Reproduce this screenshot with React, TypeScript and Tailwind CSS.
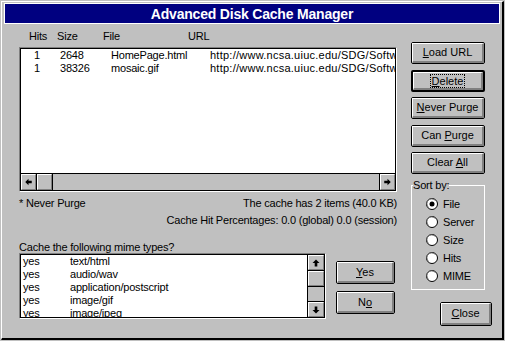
import { ReactNode } from 'react'

const CACHE_ITEMS = [
  { hits: '1', size: '2648', file: 'HomePage.html', url: 'http://www.ncsa.uiuc.edu/SDG/Software/Mosaic/HomePage.html' },
  { hits: '1', size: '38326', file: 'mosaic.gif', url: 'http://www.ncsa.uiuc.edu/SDG/Software/Mosaic/mosaic.gif' },
]

const MIME_TYPES = [
  { cache: 'yes', type: 'text/html' },
  { cache: 'yes', type: 'audio/wav' },
  { cache: 'yes', type: 'application/postscript' },
  { cache: 'yes', type: 'image/gif' },
  { cache: 'yes', type: 'image/jpeg' },
]

const SORT_OPTIONS = ['File', 'Server', 'Size', 'Hits', 'MIME']

// Win 3.1 push button: black frame, white highlight, grey shadow
function Button({ children, isDefault, className }: { children: ReactNode; isDefault?: boolean; className: string }) {
  return (
    <div className={`rounded-[2px] border-black bg-[#c0c0c0] tracking-normal ${isDefault ? 'border-2' : 'border'} ${className}`}>
      <div className="h-full w-full flex items-center justify-center border-t border-l border-t-white border-l-white border-r-2 border-b-2 border-r-[#808080] border-b-[#808080]">
        {children}
      </div>
    </div>
  )
}

function Arrow({ dir }: { dir: 'left' | 'right' | 'up' | 'down' }) {
  const rot = { left: 0, right: 180, up: 90, down: 270 }[dir]
  return (
    <svg width="16" height="16" viewBox="0 0 16 16">
      <path d="M4 8 L8 4 L8 6.5 L12 6.5 L12 9.5 L8 9.5 L8 12 Z" fill="#000" transform={`rotate(${rot} 8 8)`} />
    </svg>
  )
}

function ScrollBtn({ dir, className }: { dir: 'left' | 'right' | 'up' | 'down'; className: string }) {
  return (
    <div className={`w-[16px] h-[16px] shrink-0 bg-[#c0c0c0] border-black ${className}`}>
      <div className="w-full h-full flex items-center justify-center border-t border-l border-t-white border-l-white border-r border-b border-r-[#808080] border-b-[#808080]">
        <Arrow dir={dir} />
      </div>
    </div>
  )
}

function Thumb({ className }: { className: string }) {
  return (
    <div className={`w-[16px] h-[16px] shrink-0 bg-[#c0c0c0] border-black ${className}`}>
      <div className="w-full h-full border-t border-l border-t-white border-l-white border-r border-b border-r-[#808080] border-b-[#808080]" />
    </div>
  )
}

function Radio({ checked }: { checked?: boolean }) {
  return (
    <svg width="12" height="12" viewBox="0 0 12 12" className="shrink-0">
      <circle cx="6" cy="6" r="5.5" fill="#fff" stroke="#000" strokeWidth="1" />
      <path d="M2.2 8.6 A4.4 4.4 0 0 1 8.6 2.2" fill="none" stroke="#808080" strokeWidth="1" />
      {checked && <circle cx="6" cy="6" r="2.5" fill="#000" />}
    </svg>
  )
}

export default function App() {
  return (
    <div className="w-[505px] h-[341px] bg-[#c0c0c0] p-px font-['Liberation_Sans',Arial,sans-serif] text-[11px] tracking-[-0.2px] text-black">
      <div className="h-full flex flex-col border-t border-l border-t-white border-l-white border-r-2 border-b-2 border-r-black border-b-black">
        {/* Title bar */}
        <div className="mx-[2px] mt-px h-[21px] shrink-0 border border-white bg-[#000080] flex items-center justify-center">
          <span className="text-white font-bold text-[14px] tracking-[-0.2px] leading-none">Advanced Disk Cache Manager</span>
        </div>

        <div className="flex pl-[17px]">
          {/* Left column */}
          <div className="w-[378px] flex flex-col">
            <div className="mt-[6px] h-[13px] leading-[13px] flex pl-[10px]">
              <span className="w-[28px]">Hits</span>
              <span className="w-[46px]">Size</span>
              <span className="w-[85px]">File</span>
              <span>URL</span>
            </div>

            {/* Cache list */}
            <div className="mt-[4px] h-[145px] border border-t-[#808080] border-l-[#808080] border-r-white border-b-white">
              <div className="h-full flex flex-col border border-black bg-white">
                <div className="flex-1 overflow-hidden">
                  {CACHE_ITEMS.map((item, i) => (
                    <div key={i} className="h-[13px] leading-[13px] flex pl-[13px] whitespace-nowrap">
                      <span className="w-[26px] shrink-0">{item.hits}</span>
                      <span className="w-[51px] shrink-0">{item.size}</span>
                      <span className="w-[99px] shrink-0">{item.file}</span>
                      <span className="tracking-[0.25px]">{item.url}</span>
                    </div>
                  ))}
                </div>
                <div className="h-[17px] shrink-0 flex border-t border-black bg-[#c0c0c0]">
                  <ScrollBtn dir="left" className="border-r" />
                  <Thumb className="border-r" />
                  <div className="flex-1" />
                  <ScrollBtn dir="right" className="border-l" />
                </div>
              </div>
            </div>

            <div className="mt-[5px] h-[13px] leading-[13px] flex justify-between">
              <span>* Never Purge</span>
              <span>The cache has 2 items (40.0 KB)</span>
            </div>
            <div className="mt-[4px] h-[13px] leading-[13px] text-right">
              Cache Hit Percentages: 0.0 (global) 0.0 (session)
            </div>
            <div className="mt-[14px] h-[12px] leading-[12px]">Cache the following mime types?</div>

            <div className="flex">
              {/* Mime list */}
              <div className="w-[307px] h-[66px] border border-t-[#808080] border-l-[#808080] border-r-white border-b-white">
                <div className="h-full flex border border-black bg-white">
                  <div className="flex-1 overflow-hidden">
                    {MIME_TYPES.map((m, i) => (
                      <div key={i} className="h-[13px] leading-[13px] flex pl-[2px] whitespace-nowrap">
                        <span className="w-[47px] shrink-0">{m.cache}</span>
                        <span>{m.type}</span>
                      </div>
                    ))}
                  </div>
                  <div className="w-[17px] shrink-0 flex flex-col border-l border-black bg-[#c0c0c0]">
                    <ScrollBtn dir="up" className="border-b" />
                    <Thumb className="border-b" />
                    <div className="flex-1" />
                    <ScrollBtn dir="down" className="border-t" />
                  </div>
                </div>
              </div>
              <div className="ml-[10px] flex flex-col">
                <Button className="mt-[8px] w-[59px] h-[23px]"><span><u>Y</u>es</span></Button>
                <Button className="mt-[7px] w-[59px] h-[23px]"><span>N<u>o</u></span></Button>
              </div>
            </div>
          </div>

          {/* Right column */}
          <div className="ml-[14px] w-[81px] flex flex-col">
            <Button className="mt-[18px] w-[74px] h-[22px]"><span><u>L</u>oad URL</span></Button>
            <Button isDefault className="mt-[6px] w-[74px] h-[22px]">
              <span className="px-px border border-dotted border-black leading-[12px]"><u>D</u>elete</span>
            </Button>
            <Button className="mt-[5px] w-[74px] h-[22px]"><span><u>N</u>ever Purge</span></Button>
            <Button className="mt-[6px] w-[74px] h-[22px]"><span>Can <u>P</u>urge</span></Button>
            <Button className="mt-[5px] w-[74px] h-[22px]"><span>Clear <u>A</u>ll</span></Button>

            {/* Sort by group */}
            <div className="relative mt-[11px] w-[74px] h-[105px] border border-white">
              <span className="absolute -top-[7px] left-[1px] bg-[#c0c0c0] leading-[12px]">Sort by:</span>
              <div className="pt-[9px] pl-[14px] flex flex-col">
                {SORT_OPTIONS.map((opt, i) => (
                  <div key={opt} className="h-[18px] flex items-center gap-[5px]">
                    <Radio checked={i === 0} />
                    <span>{opt}</span>
                  </div>
                ))}
              </div>
            </div>

            <Button className="mt-[12px] ml-[29px] w-[52px] h-[24px]"><span><u>C</u>lose</span></Button>
          </div>
        </div>
      </div>
    </div>
  )
}
